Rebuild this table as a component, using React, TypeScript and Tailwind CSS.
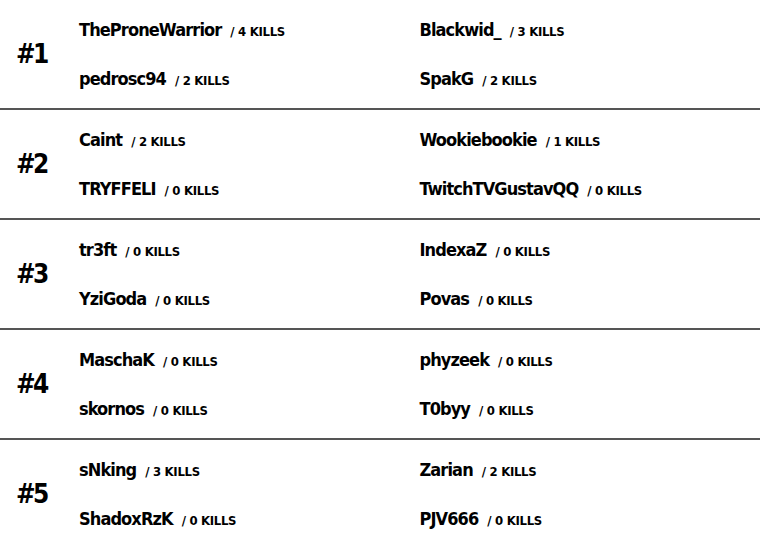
const rounds = [
  {
    rank: "#1",
    players: [
      { name: "TheProneWarrior", kills: 4 },
      { name: "Blackwid_", kills: 3 },
      { name: "pedrosc94", kills: 2 },
      { name: "SpakG", kills: 2 },
    ],
  },
  {
    rank: "#2",
    players: [
      { name: "Caint", kills: 2 },
      { name: "Wookiebookie", kills: 1 },
      { name: "TRYFFELI", kills: 0 },
      { name: "TwitchTVGustavQQ", kills: 0 },
    ],
  },
  {
    rank: "#3",
    players: [
      { name: "tr3ft", kills: 0 },
      { name: "IndexaZ", kills: 0 },
      { name: "YziGoda", kills: 0 },
      { name: "Povas", kills: 0 },
    ],
  },
  {
    rank: "#4",
    players: [
      { name: "MaschaK", kills: 0 },
      { name: "phyzeek", kills: 0 },
      { name: "skornos", kills: 0 },
      { name: "T0byy", kills: 0 },
    ],
  },
  {
    rank: "#5",
    players: [
      { name: "sNking", kills: 3 },
      { name: "Zarian", kills: 2 },
      { name: "ShadoxRzK", kills: 0 },
      { name: "PJV666", kills: 0 },
    ],
  },
]

export default function App() {
  return (
    <div
      className="w-[760px] h-[540px] overflow-hidden bg-white text-black"
      style={{ fontFamily: '"Liberation Sans Narrow", "DejaVu Sans Condensed", "Liberation Sans", sans-serif' }}
    >
      {rounds.map((round, i) => (
        <div
          key={round.rank}
          className={
            i < rounds.length - 1
              ? "flex items-center h-[110px] border-b-2 border-[#555555]"
              : "flex items-center h-[108px]"
          }
        >
          <div className="w-[79px] pl-[16px] text-[26px] leading-[29px] font-bold tracking-[-2.5px]">
            {round.rank}
          </div>
          <div className="grid grid-cols-2 w-[681px] gap-y-[25px] self-start pt-[18px]">
            {round.players.map((p) => (
              <div key={p.name} className="flex items-baseline h-[24px] leading-[24px]">
                <span className="text-[18px] font-bold tracking-[-0.9px]">{p.name}</span>
                <span className="ml-[9px] text-[13px] font-semibold tracking-[-0.3px]">/ {p.kills} KILLS</span>
              </div>
            ))}
          </div>
        </div>
      ))}
    </div>
  )
}
